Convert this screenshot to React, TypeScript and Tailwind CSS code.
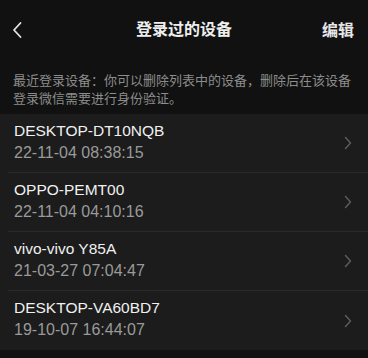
import React from 'react';

const devices = [
  { name: 'DESKTOP-DT10NQB', time: '22-11-04 08:38:15' },
  { name: 'OPPO-PEMT00', time: '22-11-04 04:10:16' },
  { name: 'vivo-vivo Y85A', time: '21-03-27 07:04:47' },
  { name: 'DESKTOP-VA60BD7', time: '19-10-07 16:44:07' },
];

const font = { fontFamily: '"Liberation Sans", "Noto Sans CJK SC", sans-serif' };

export default function App() {
  return (
    <div className="w-[368px] h-[358px] overflow-hidden bg-[#111111] text-white" style={font}>
      <div className="relative flex h-[60px] items-center justify-center">
        <svg className="absolute left-[11px] top-[21px]" width="12" height="18" viewBox="0 0 12 18">
          <path d="M9.5 2 L3 9 L9.5 16" fill="none" stroke="#e6e6e6" strokeWidth="1.8" strokeLinecap="round" strokeLinejoin="round" />
        </svg>
        <span className="text-[16px] font-bold text-[#eeeeee]">登录过的设备</span>
        <span className="absolute right-[14px] top-[19px] text-[16px] font-bold text-[#e6e6e6]">编辑</span>
      </div>
      <p className="px-[13px] pt-[12px] text-[13px] leading-[18px] text-[#8c8c8c]">
        最近登录设备：你可以删除列表中的设备，删除后在该设备登录微信需要进行身份验证。
      </p>
      <div className="mt-[6px] bg-[#1c1c1c]">
        {devices.map((d, i) => (
          <div key={d.name} className="pl-[8px]">
            <div
              className={`flex h-[59px] items-center justify-between pl-[6px] pr-[16px] ${
                i < devices.length - 1 ? 'border-b border-[#2a2a2a]' : ''
              }`}
            >
              <div className="flex flex-col pb-[3px]">
                <span className="text-[15.5px] leading-[22px] text-[#f0f0f0]">{d.name}</span>
                <span className="text-[16px] leading-[22px] text-[#9a9a9a]">{d.time}</span>
              </div>
              <svg width="8" height="14" viewBox="0 0 8 14">
                <path d="M1.5 1.5 L6.5 7 L1.5 12.5" fill="none" stroke="#5e5e5e" strokeWidth="1.4" strokeLinecap="round" strokeLinejoin="round" />
              </svg>
            </div>
          </div>
        ))}
      </div>
    </div>
  );
}
